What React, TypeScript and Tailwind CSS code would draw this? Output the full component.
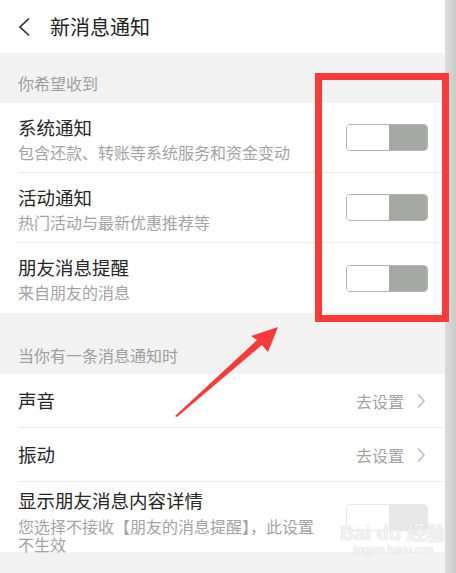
import React from "react";

const font = "font-['Noto_Sans_CJK_SC','Noto_Sans',sans-serif]";

function Toggle({ disabled = false }: { disabled?: boolean }) {
  return (
    <div
      className={`flex h-[27px] w-[82px] shrink-0 overflow-hidden rounded-[4px] border ${
        disabled ? "border-[#e6e6e6]" : "border-[#b4b4b4]"
      }`}
    >
      <div className="h-full w-[42px] bg-white" />
      <div className={`h-full flex-1 ${disabled ? "bg-[#e8e8e8]" : "bg-[#a6a8a4]"}`} />
    </div>
  );
}

function SwitchRow({ title, desc, last = false }: { title: string; desc: string; last?: boolean }) {
  return (
    <div className="flex h-[70px] items-center bg-white pl-[18px]">
      <div
        className={`flex h-full flex-1 items-center pr-[17px] ${last ? "" : "border-b border-[#ececec]"}`}
      >
        <div className="flex-1 pt-[2px]">
          <div className="text-[18.5px] leading-[26px] text-[#262626]">{title}</div>
          <div className="text-[16px] leading-[24px] text-[#a3a3a3]">{desc}</div>
        </div>
        <Toggle />
      </div>
    </div>
  );
}

function LinkRow({ title, last = false }: { title: string; last?: boolean }) {
  return (
    <div className="flex h-[54px] bg-white pl-[18px]">
      <div
        className={`flex h-full flex-1 items-center pr-[19px] ${last ? "" : "border-b border-[#ececec]"}`}
      >
        <div className="flex-1 text-[18.5px] text-[#262626]">{title}</div>
        <span className="text-[16px] text-[#a3a3a3]">去设置</span>
        <svg width="10" height="16" viewBox="0 0 10 16" className="ml-[12px]" fill="none">
          <path d="M2 1.5L8 8L2 14.5" stroke="#bdbdbd" strokeWidth="1.4" />
        </svg>
      </div>
    </div>
  );
}

export default function App() {
  return (
    <div className={`relative flex h-[573px] w-[456px] overflow-hidden bg-[#f2f2f2] ${font}`}>
      <div className="flex w-[445px] flex-col">
        <div className="flex h-[53px] items-center bg-white pl-[18px]">
          <svg width="13" height="20" viewBox="0 0 13 20" fill="none">
            <path d="M11 1.5L2 10L11 18.5" stroke="#333" strokeWidth="1.7" />
          </svg>
          <span className="ml-[19px] text-[20px] text-[#222]">新消息通知</span>
        </div>

        <div className="flex h-[50px] items-center pl-[18px] pt-[10px] text-[16px] text-[#9e9e9e]">
          你希望收到
        </div>
        <SwitchRow title="系统通知" desc="包含还款、转账等系统服务和资金变动" />
        <SwitchRow title="活动通知" desc="热门活动与最新优惠推荐等" />
        <SwitchRow title="朋友消息提醒" desc="来自朋友的消息" last />

        <div className="flex h-[61px] items-center pl-[18px] pt-[22px] text-[16px] text-[#9e9e9e]">
          当你有一条消息通知时
        </div>
        <LinkRow title="声音" />
        <LinkRow title="振动" />

        <div className="flex h-[70px] items-start bg-white pl-[18px] pr-[17px] pt-[5px]">
          <div className="w-[306px]">
            <div className="text-[18.5px] leading-[26px] text-[#262626]">显示朋友消息内容详情</div>
            <div className="mt-[4px] text-[16px] leading-[18px] text-[#a3a3a3]">
              您选择不接收【朋友的消息提醒】，此设置不生效
            </div>
          </div>
          <div className="ml-auto mt-[17px]">
            <Toggle disabled />
          </div>
        </div>
      </div>
      <div className="w-[11px] bg-gradient-to-r from-[#dcdcdc] to-[#c9c9c9]" />

      {/* annotation overlay */}
      <div className="pointer-events-none absolute left-[315px] top-[73px] h-[249px] w-[134px] border-[7px] border-[#fd3a3a]" />
      <svg className="pointer-events-none absolute left-0 top-0" width="456" height="573">
        <polygon
          points="175,416 257,340 251,336 278,327 268,352 262,345 177,417"
          fill="#fd3a3a"
        />
      </svg>

      {/* watermark */}
      <div className="pointer-events-none absolute left-[340px] top-[523px] flex flex-col items-center font-['Liberation_Sans',sans-serif] text-white/80">
        <span className="text-[20px] font-bold leading-[20px] [text-shadow:0_0_1px_#bbb]">Bai du 经验</span>
        <span className="text-[10px] leading-[14px] [text-shadow:0_0_1px_#bbb]">jingyan.baidu.com</span>
      </div>
    </div>
  );
}
